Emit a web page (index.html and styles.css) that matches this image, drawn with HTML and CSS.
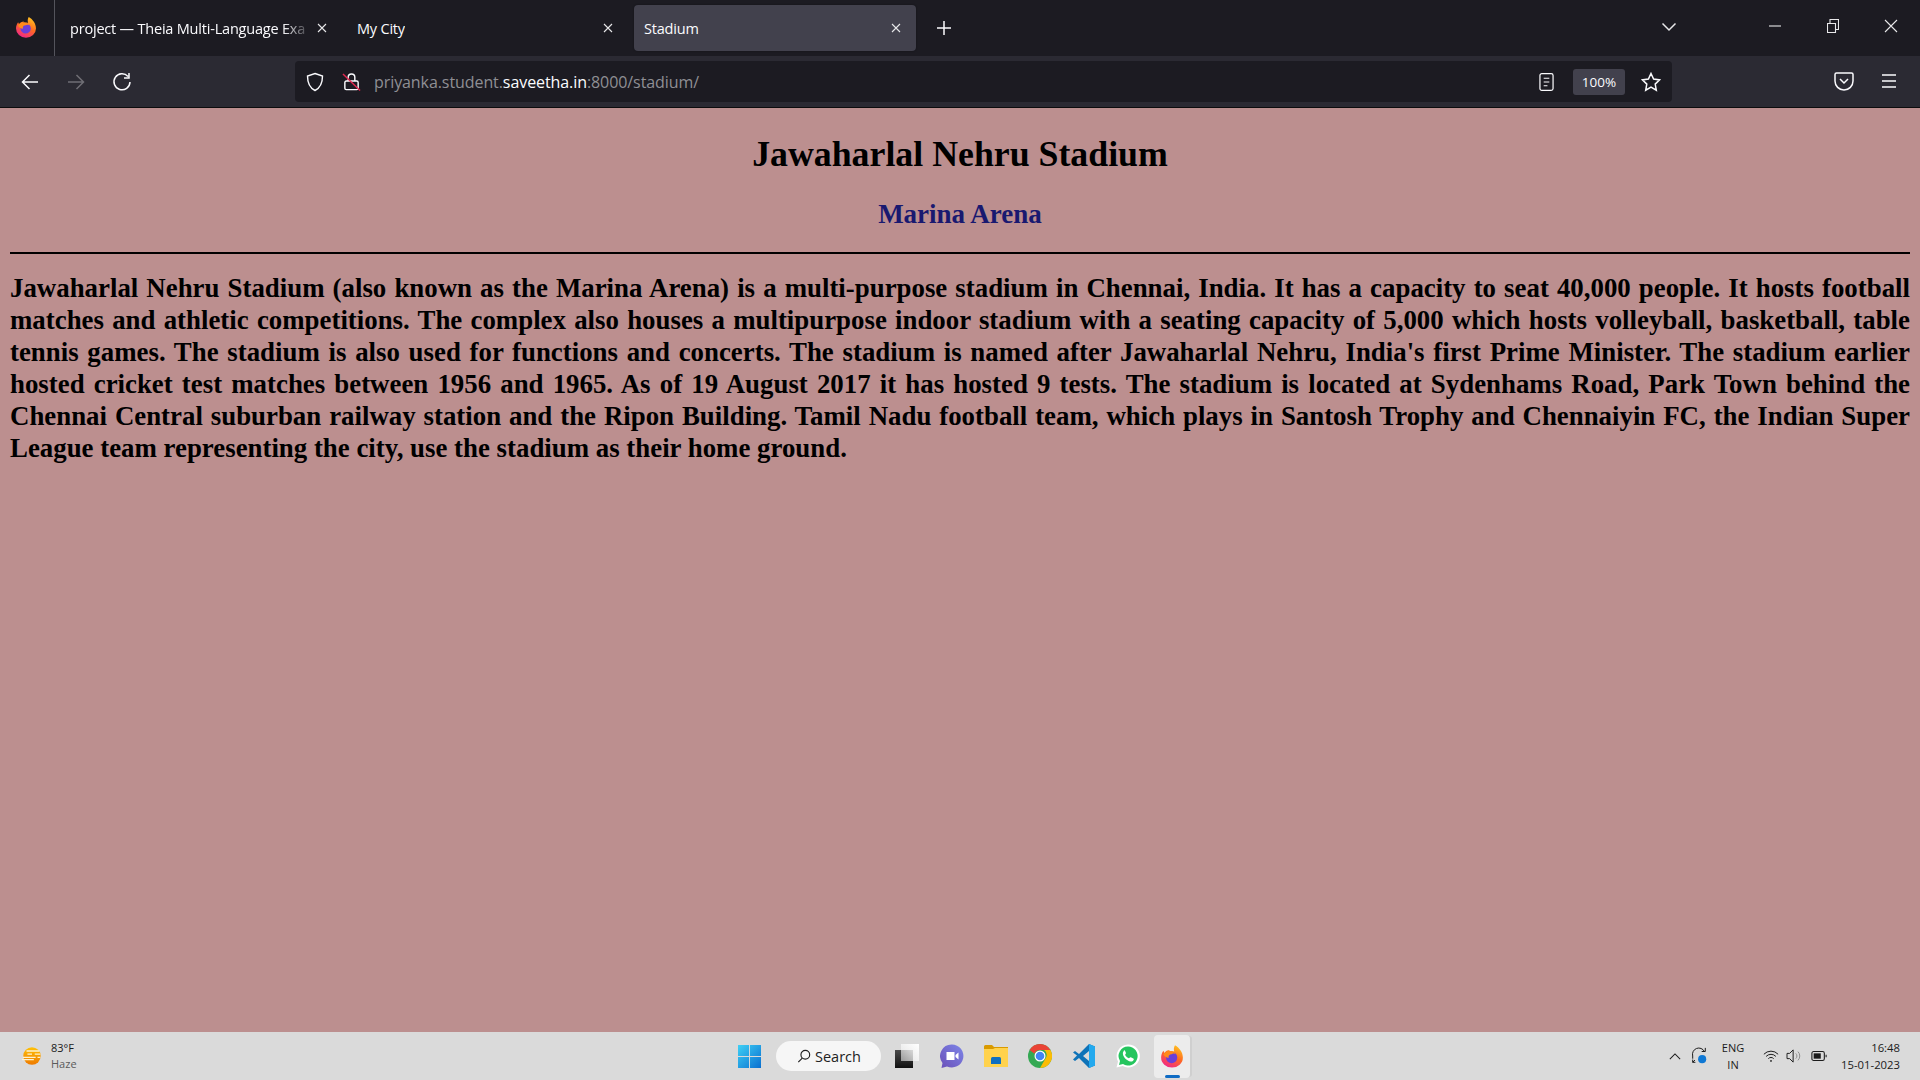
FILE: index.html
```html
<!DOCTYPE html>
<html lang="en">
<head>
<meta charset="utf-8">
<title>Stadium</title>
<link rel="stylesheet" href="styles.css">
</head>
<body>
<div class="window">
  <header class="tabbar">
    <div class="ff-slot">
      <svg class="ff" viewBox="0 0 32 32"><defs><linearGradient id="fa" x1="0.8" y1="0" x2="0.3" y2="1"><stop offset="0" stop-color="#ffc91f"/><stop offset=".5" stop-color="#ff6a22"/><stop offset="1" stop-color="#f0258a"/></linearGradient></defs><path fill="url(#fa)" d="M20 1.500C26 5 30.500 11 30.500 18a14.500 13.500 0 0 1-29 0c0-3 1-6.500 3-9L6 12c1.500-2.500 4-4 7-4l-1.500 2.500c2.500-1.500 5.500-1.500 7.500-.5-1-3-.5-6 1-8.500z"/><circle cx="15.500" cy="18" r="7.500" fill="#6b3fd8"/><path fill="#ff8a1a" d="M4.500 14c2-4 7-5.500 10-4.500 3 .5 5.500 2 6.500 4-2-1-4-1-5.500 0-3 .2-4.500 1.500-4 5-3-.5-6-2-7-4.500z"/></svg>
    </div>
    <div class="tab tab-first"><span class="tab-label tab-fade">project — Theia Multi-Language Exa</span><svg class="x" viewBox="0 0 12 12"><path d="M2 2l8 8M10 2l-8 8"/></svg></div>
    <div class="tab tab-second"><span class="tab-label">My City</span><svg class="x" viewBox="0 0 12 12"><path d="M2 2l8 8M10 2l-8 8"/></svg></div>
    <div class="tab tab-active"><span class="tab-label">Stadium</span><svg class="x" viewBox="0 0 12 12"><path d="M2 2l8 8M10 2l-8 8"/></svg></div>
    <svg class="plus" viewBox="0 0 16 16"><path d="M8 1v14M1 8h14"/></svg>
    <div class="tab-spacer"></div>
    <svg class="chev" viewBox="0 0 16 10"><path d="M1.500 1.500L8 8l6.500-6.500"/></svg>
    <svg class="win-btn win-min" viewBox="0 0 12 12"><path d="M0 6h12"/></svg>
    <svg class="win-btn win-rest" viewBox="0 0 12 14"><path d="M.5 4.500h8v9h-8zM3 4.500V.5h8.500v10h-3"/></svg>
    <svg class="win-btn win-close" viewBox="0 0 14 14"><path d="M1 1l12 12M13 1L1 13"/></svg>
  </header>

  <nav class="toolbar">
    <svg class="tool tool-back" viewBox="0 0 20 20"><path d="M18 10H2.500M9.500 3l-7 7 7 7"/></svg>
    <svg class="tool tool-fwd" viewBox="0 0 20 20"><path d="M2 10h15.500M10.500 3l7 7-7 7"/></svg>
    <svg class="tool tool-reload" viewBox="0 0 20 20"><path d="M16 4.500A8 8 0 1 0 18 10M17 1v5h-5"/></svg>
    <div class="urlbar">
      <svg class="u-shield" viewBox="0 0 20 20"><path d="M10 1.500l7.500 2.500c0 7-1.500 11.500-7.500 14.500C4 15.500 2.500 11 2.500 4z"/></svg>
      <svg class="u-lock" viewBox="0 0 20 20"><path class="lock-body" d="M6.500 9V5a3.500 3.500 0 0 1 7 0v4M4.500 9h11a1.500 1.500 0 0 1 1.500 1.500v6a1.500 1.500 0 0 1-1.500 1.500h-11A1.500 1.500 0 0 1 3 16.500v-6A1.500 1.500 0 0 1 4.500 9z"/><path class="lock-slash" d="M1 1.500l18 17.500"/></svg>
      <div class="url"><span class="dim">priyanka.student.</span><span class="bright">saveetha.in</span><span class="dim">:8000/stadium/</span></div>
      <svg class="u-reader" viewBox="0 0 16 20"><rect x="1" y="1" width="14" height="18" rx="2"/><path d="M5 6h6M5 10h6M5 14h4"/></svg>
      <div class="zoom-badge">100%</div>
      <svg class="u-star" viewBox="0 0 20 20"><path d="M10 1.500l2.600 5.600 6 .8-4.400 4.200 1.100 6.100L10 15.200l-5.300 3 1.100-6.100L1.400 7.900l6-.8z"/></svg>
    </div>
    <svg class="tool tool-pocket" viewBox="0 0 20 20"><path d="M2.500 2h15a1.500 1.500 0 0 1 1.500 1.500V10a9 9 0 0 1-18 0V3.500A1.500 1.500 0 0 1 2.500 2zM6 8l4 4 4-4"/></svg>
    <svg class="tool tool-menu" viewBox="0 0 20 20"><path d="M3 4h14M3 10h14M3 16h14"/></svg>
  </nav>

  <main class="page">
    <h1 class="title">Jawaharlal Nehru Stadium</h1>
    <h2 class="subtitle">Marina Arena</h2>
    <hr class="rule">
    <p class="body-text">Jawaharlal Nehru Stadium (also known as the Marina Arena) is a multi-purpose stadium in Chennai, India. It has a capacity to seat 40,000 people. It hosts football matches and athletic competitions. The complex also houses a multipurpose indoor stadium with a seating capacity of 5,000 which hosts volleyball, basketball, table tennis games. The stadium is also used for functions and concerts. The stadium is named after Jawaharlal Nehru, India's first Prime Minister. The stadium earlier hosted cricket test matches between 1956 and 1965. As of 19 August 2017 it has hosted 9 tests. The stadium is located at Sydenhams Road, Park Town behind the Chennai Central suburban railway station and the Ripon Building. Tamil Nadu football team, which plays in Santosh Trophy and Chennaiyin FC, the Indian Super League team representing the city, use the stadium as their home ground.</p>
  </main>

  <footer class="taskbar">
    <div class="weather">
      <svg class="weather-icon" viewBox="0 0 24 24"><defs><linearGradient id="sun" x1="0" y1="0" x2="0" y2="1"><stop offset="0" stop-color="#ffc107"/><stop offset="1" stop-color="#ee7a00"/></linearGradient></defs><circle cx="12" cy="12" r="9.500" fill="url(#sun)"/><path class="haze" d="M6 6.500h14M7 10h5M15 10h6M2 13.500h14M18 13.500h3M1 16h13"/></svg>
      <div class="weather-text"><div class="w-temp">83°F</div><div class="w-cond">Haze</div></div>
    </div>
    <div class="task-center">
      <svg class="t-win" viewBox="0 0 24 24"><defs><linearGradient id="wg" x1="0" y1="0" x2="1" y2="1"><stop offset="0" stop-color="#3fd0f5"/><stop offset="1" stop-color="#0a6fd0"/></linearGradient></defs><path fill="url(#wg)" d="M0 0h11.500v11.500H0zM12.500 0H24v11.500H12.500zM0 12.500h11.500V24H0zM12.500 12.500H24V24H12.500z"/></svg>
      <div class="search-pill"><svg class="s-glass" viewBox="0 0 16 16"><circle cx="9.500" cy="6.500" r="5"/><path d="M6 10.500l-4.500 4.500"/></svg><span>Search</span></div>
      <svg class="t-icon t-view" viewBox="0 0 24 24"><defs><linearGradient id="tv" x1="1" y1="0" x2="0" y2="1"><stop offset="0" stop-color="#fff"/><stop offset="1" stop-color="#e2e2e2"/></linearGradient><linearGradient id="tv2" x1="1" y1="0" x2="0" y2="1"><stop offset="0" stop-color="#d8d8d8"/><stop offset="1" stop-color="#9a9a9a"/></linearGradient><linearGradient id="tv3" x1="0" y1="0" x2="0" y2="1"><stop offset="0" stop-color="#4a4a4a"/><stop offset="1" stop-color="#111"/></linearGradient></defs><rect x="6" y="0" width="18" height="17" fill="url(#tv)"/><path fill="url(#tv3)" d="M0 6h6v11h12v7H0z"/><rect x="6" y="6" width="12" height="11" fill="url(#tv2)"/></svg>
      <svg class="t-icon t-chat" viewBox="0 0 24 24"><defs><linearGradient id="cg" x1="1" y1="0" x2="0" y2="1"><stop offset="0" stop-color="#7d86e8"/><stop offset="1" stop-color="#6a4fb8"/></linearGradient></defs><path fill="url(#cg)" d="M12 .5a11.500 11.500 0 1 1-5 21.900L1.500 24l1-5A11.500 11.500 0 0 1 12 .5z"/><path fill="#fff" d="M6.500 8h8v8h-8zM15.500 11l3-2.500v7l-3-2.500z"/></svg>
      <svg class="t-icon t-folder" viewBox="0 0 24 24"><path fill="#d99a00" d="M0 2.500A1.500 1.500 0 0 1 1.500 1H8l2 2h14v4H0z"/><path fill="#ffd24d" d="M0 5h9l2-1h13v19H0z"/><path fill="#0f6fc0" d="M7 14.500a1.500 1.500 0 0 1 1.500-1.500h7a1.500 1.500 0 0 1 1.500 1.500V20H7z"/></svg>
      <svg class="t-icon t-chrome" viewBox="0 0 24 24"><circle cx="12" cy="12" r="12" fill="#34a853"/><path fill="#ea4335" d="M12 0a12 12 0 0 1 10.400 6H12a6 6 0 0 0-5.600 3.800L1.600 6A12 12 0 0 1 12 0z"/><path fill="#fbbc04" d="M22.400 6A12 12 0 0 1 12 24l5.200-9A6 6 0 0 0 16 6z"/><circle cx="12" cy="12" r="5.500" fill="#fff"/><circle cx="12" cy="12" r="4.300" fill="#4285f4"/></svg>
      <svg class="t-icon t-code" viewBox="0 0 24 24"><path fill="#0e73b8" d="M1 8.500l2-1.500 4 3 10-10 6 2.500v19l-6 2.500-10-10-4 3-2-1.500 4-4zM17 7l-6 5 6 5z"/><path fill="#23a9ee" d="M17 0l6 2.500v19L17 24z"/></svg>
      <svg class="t-icon t-wa" viewBox="0 0 24 24"><path fill="#fff" d="M12 .5A11.500 11.500 0 0 0 2 17.500L.5 23.500l6.200-1.500A11.500 11.500 0 1 0 12 .5z"/><path fill="#25c55e" d="M12 2.500a9.500 9.500 0 0 0-8 14.500l-1 4 4-1A9.500 9.500 0 1 0 12 2.500z"/><path fill="#fff" d="M8.500 6.500c-1 .5-2 2-1.500 4 .7 3 4 6.500 7.500 7 1.700.2 3-.7 3.300-2 .1-.6-.2-1-1-1.300l-2-1c-.5-.2-.8 0-1.200.6-.3.500-.7.600-1.200.3-1.500-.7-2.500-1.800-3.200-3.100-.2-.4 0-.7.400-1.100.4-.4.500-.8.300-1.200l-.9-2c-.2-.5-.7-.5-1.500-.2z"/></svg>
      <div class="t-active">
        <svg class="t-icon t-ff" viewBox="0 0 32 32"><defs><linearGradient id="fb" x1="0.8" y1="0" x2="0.3" y2="1"><stop offset="0" stop-color="#ffc91f"/><stop offset=".5" stop-color="#ff6a22"/><stop offset="1" stop-color="#f0258a"/></linearGradient></defs><path fill="url(#fb)" d="M20 1.500C26 5 30.500 11 30.500 18a14.500 13.500 0 0 1-29 0c0-3 1-6.500 3-9L6 12c1.500-2.500 4-4 7-4l-1.500 2.500c2.500-1.500 5.500-1.500 7.500-.5-1-3-.5-6 1-8.500z"/><circle cx="15.500" cy="18" r="7.500" fill="#6b3fd8"/><path fill="#ff8a1a" d="M4.500 14c2-4 7-5.500 10-4.500 3 .5 5.500 2 6.500 4-2-1-4-1-5.500 0-3 .2-4.500 1.500-4 5-3-.5-6-2-7-4.500z"/></svg>
        <span class="t-underline"></span>
      </div>
    </div>
    <div class="tray">
      <svg class="tr-caret" viewBox="0 0 14 8"><path d="M1 7l6-6 6 6"/></svg>
      <svg class="tr-sync" viewBox="0 0 20 20"><path d="M16 5A7 7 0 0 0 3 10v3M13 5h4V1M3 17l2.500-2.500M3 14v3h3"/><circle cx="13.500" cy="13.500" r="4.500" class="sync-dot"/></svg>
      <div class="tr-lang"><div>ENG</div><div>IN</div></div>
      <svg class="tr-wifi" viewBox="0 0 18 14"><path d="M1 5a11 11 0 0 1 16 0M3.500 7.500a7.500 7.500 0 0 1 11 0M6 10a4 4 0 0 1 6 0"/><circle cx="9" cy="12.500" r="1" class="solid"/></svg>
      <svg class="tr-vol" viewBox="0 0 18 16"><path d="M1 5h3l4-4v14l-4-4H1z"/><path class="faint" d="M11 5a4 4 0 0 1 0 6M13.500 3a7 7 0 0 1 0 10"/></svg>
      <svg class="tr-bat" viewBox="0 0 18 12"><rect x="1" y="1" width="14" height="10" rx="2"/><rect x="3" y="3" width="8" height="6" class="solid"/><path d="M17 4.500v3"/></svg>
      <div class="tr-clock"><div>16:48</div><div>15-01-2023</div></div>
    </div>
  </footer>
</div>
</body>
</html>
```

FILE: styles.css
```css
* { box-sizing: border-box; }
html, body { margin: 0; height: 100%; }
body { overflow: hidden; }
svg { display: block; flex: none; fill: none; }

.window { display: flex; flex-direction: column; height: 1080px; width: 1920px; }

/* Tab strip */
.tabbar { height: 56px; background: #1c1b22; display: flex; align-items: center; flex: none; font-family: "Open Sans", sans-serif; font-size: 14.5px; color: #fbfbfe; }
.ff-slot { width: 55px; height: 56px; border-right: 1px solid #54545c; display: flex; align-items: center; padding-left: 15px; }
.ff { width: 22px; height: 22px; margin-top: -3px; }
.tab { height: 46px; border-radius: 4px; display: flex; align-items: center; justify-content: space-between; }
.tab-first { width: 277px; padding-left: 15px; padding-right: 4px; }
.tab-second { width: 287px; padding-left: 25px; padding-right: 5px; }
.tab-active { width: 282px; margin-left: 15px; padding-left: 10px; padding-right: 14px; background: #42414d; box-shadow: 0 0 2px rgba(0,0,0,.4); }
.tab-label { white-space: nowrap; overflow: hidden; letter-spacing: -.2px; }
.tab-fade { width: 242px; -webkit-mask-image: linear-gradient(90deg, #000 88%, transparent); mask-image: linear-gradient(90deg, #000 88%, transparent); }
.x { width: 12px; height: 12px; stroke: #e8e8ea; stroke-width: 1.1; }
.plus { width: 16px; height: 16px; margin-left: 20px; stroke: #fbfbfe; stroke-width: 1.5; }
.tab-spacer { flex: 1; }
.chev { width: 16px; height: 10px; stroke: #e8e8ea; stroke-width: 1.5; margin-right: 92px; margin-top: -3px; }
.win-btn { stroke: #e8e8ea; stroke-width: 1.100; }
.win-min { width: 12px; height: 12px; margin-right: 46px; margin-top: -5px; }
.win-rest { width: 12px; height: 14px; margin-right: 45px; margin-top: -4px; }
.win-close { width: 14px; height: 14px; margin-right: 22px; margin-top: -5px; }

/* Toolbar */
.toolbar { height: 52px; background: #2b2a33; border-bottom: 1px solid #0c0c0d; display: flex; align-items: center; flex: none; font-family: "Open Sans", sans-serif; }
.tool { width: 20px; height: 20px; stroke: #fbfbfe; stroke-width: 1.500; margin-top: 1px; }
.tool-back { margin-left: 20px; }
.tool-fwd { margin-left: 26px; stroke: #6f6e75; }
.tool-reload { margin-left: 26px; }
.tool-pocket { margin-left: 162px; margin-top: -1px; }
.tool-menu { margin-left: 25px; margin-top: -1px; }
.urlbar { width: 1377px; height: 41px; margin-left: 163px; background: #1c1b22; border-radius: 4px; display: flex; align-items: center; padding-top: 1px; margin-top: -1px; }
.u-shield { width: 20px; height: 20px; margin-left: 10px; stroke: #fbfbfe; stroke-width: 1.400; }
.u-lock { width: 19px; height: 20px; margin-left: 17px; stroke-width: 1.500; }
.lock-body { stroke: #fbfbfe; }
.lock-slash { stroke: #e22850; }
.url { margin-left: 13px; flex: 1; font-size: 16px; letter-spacing: -.08px; white-space: nowrap; }
.dim { color: #8f8f94; }
.bright { color: #fbfbfe; }
.u-reader { width: 15px; height: 20px; stroke: #fbfbfe; stroke-width: 1.300; }
.zoom-badge { width: 52px; height: 26px; margin-left: 19px; background: #42414d; border-radius: 3px; color: #fbfbfe; font-size: 13.500px; display: flex; align-items: center; justify-content: center; }
.u-star { width: 20px; height: 20px; margin-left: 16px; margin-right: 11px; stroke: #fbfbfe; stroke-width: 1.500; }

/* Page */
.page { flex: 1; background: #bc8f8f; padding: 0 10px; font-family: "Liberation Serif", serif; color: #000; overflow: hidden; }
.title { margin: 26px 0 0; font-size: 35.800px; line-height: 40px; font-weight: 700; text-align: center; }
.subtitle { margin: 25px 0 0; font-size: 27px; line-height: 30px; font-weight: 700; text-align: center; color: #191970; }
.rule { margin: 23px 0 0; height: 2px; border: 0; background: #000; }
.body-text { margin: 18px 0 0; font-size: 26.850px; line-height: 32px; font-weight: 700; text-align: justify; }

/* Taskbar */
.taskbar { height: 48px; background: #dadada; display: flex; align-items: center; flex: none; font-family: "Open Sans", sans-serif; color: #1b1b1b; position: relative; }
.weather { width: 738px; display: flex; align-items: center; padding-left: 21px; }
.weather-icon { width: 22px; height: 22px; }
.haze { stroke: #fdf2d0; stroke-width: 1.500; }
.weather-text { margin-left: 8px; font-size: 11px; line-height: 16px; }
.w-temp { color: #1b1b1b; }
.w-cond { color: #5b5b5b; }
.task-center { display: flex; align-items: center; width: 452px; }
.t-win { width: 23px; height: 23px; }
.search-pill { width: 108px; height: 30px; margin-left: 15px; background: #f6f6f6; border-radius: 15px; display: flex; align-items: center; padding-left: 21px; font-size: 14.500px; color: #222; gap: 4px; }
.s-glass { width: 14px; height: 14px; stroke: #1f1f1f; stroke-width: 1.300; }
.t-icon { width: 24px; height: 24px; }
.t-view { margin-left: 14px; }
.t-chat { margin-left: 21px; }
.t-folder { margin-left: 20px; }
.t-chrome { margin-left: 20px; }
.t-code { margin-left: 20px; }
.t-wa { margin-left: 20px; }
.t-active { width: 37px; height: 43px; margin-left: 14px; background: #ececec; border-radius: 4px; display: flex; flex-direction: column; align-items: center; justify-content: center; position: relative; box-shadow: 3px 0 0 -1px #cfcfcf; }
.t-underline { position: absolute; bottom: 0; left: 11px; width: 15px; height: 3px; border-radius: 2px; background: #0f6cc4; }
.tray { flex: 1; display: flex; align-items: center; padding-left: 479px; font-size: 11.500px; }
.tr-caret { width: 12px; height: 7px; stroke: #1b1b1b; stroke-width: 1.200; }
.tr-sync { width: 18px; height: 18px; margin-left: 9px; stroke: #1b1b1b; stroke-width: 1.100; }
.sync-dot { fill: #0f78d4; stroke: none; }
.tr-lang { width: 30px; margin-left: 10px; text-align: center; line-height: 17px; font-size: 11px; }
.tr-wifi { width: 16px; height: 14px; margin-left: 15px; stroke: #1b1b1b; stroke-width: 1.100; }
.tr-vol { width: 16px; height: 14px; margin-left: 7px; stroke: #1b1b1b; stroke-width: 1.100; }
.faint { stroke: #8a8a8a; }
.tr-bat { width: 16px; height: 12px; margin-left: 9px; stroke: #1b1b1b; stroke-width: 1.200; }
.solid { fill: #1b1b1b; stroke: none; }
.tr-clock { margin-left: 13px; text-align: right; line-height: 17px; font-size: 11.300px; white-space: nowrap; width: 60px; }
```
